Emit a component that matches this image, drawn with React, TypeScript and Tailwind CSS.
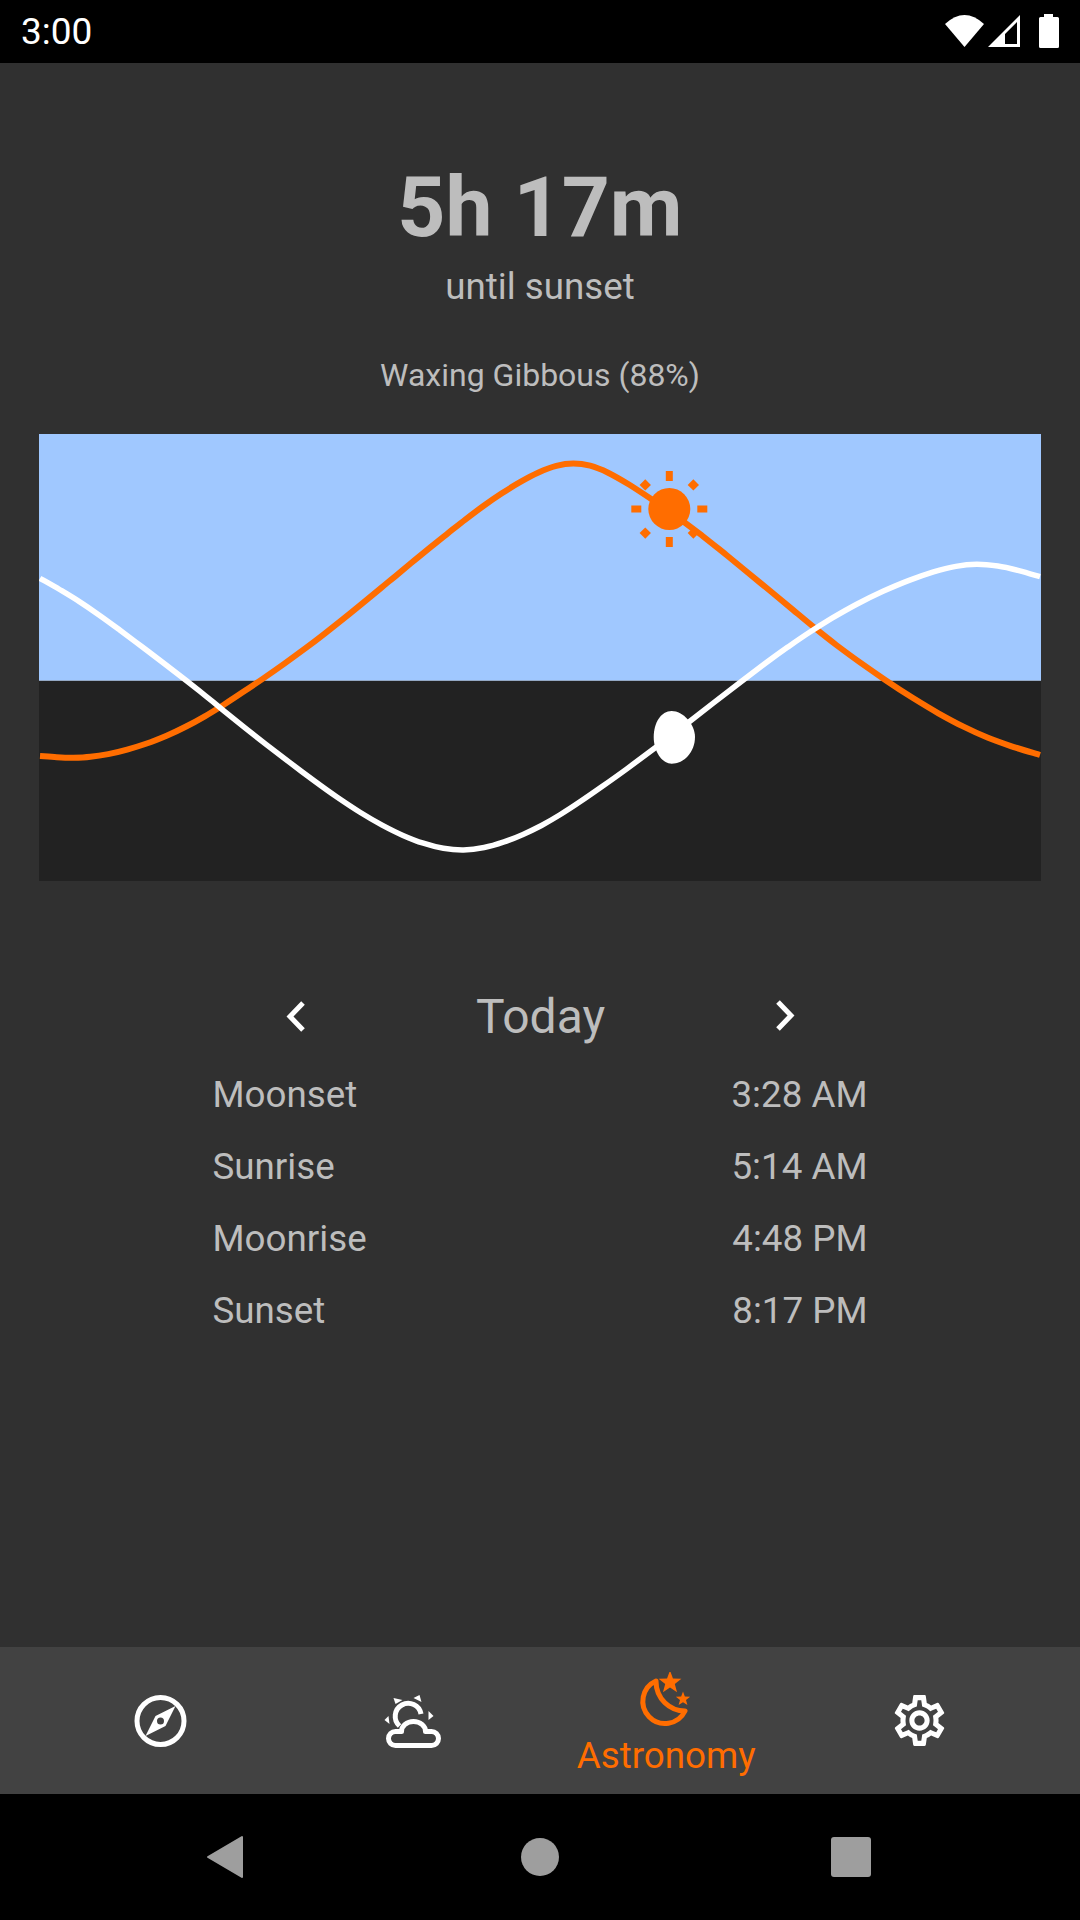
import { ReactNode } from "react";

const ORANGE = "#ff6d00";

type Pt = [number, number];

const SUN: Pt[] = [
  [0, 948], [50, 953], [100, 958], [150, 955], [200, 946], [260, 932], [320, 915], [380, 890], [440, 863],
  [500, 828], [545, 800], [600, 763], [665, 718], [740, 670], [800, 622], [850, 587], [910, 535], [970, 490],
  [1030, 440], [1070, 402], [1130, 357], [1170, 322], [1220, 282], [1280, 235], [1330, 195], [1380, 160],
  [1440, 125], [1500, 88], [1550, 68], [1600, 60], [1650, 66], [1700, 88], [1750, 122], [1830, 170], [1940, 250],
  [1990, 285], [2050, 340], [2120, 392], [2190, 455], [2270, 515], [2325, 568], [2380, 610], [2450, 665],
  [2540, 722], [2620, 780], [2700, 825], [2770, 865], [2840, 895], [2910, 925], [3000, 945],
];
const MOON: Pt[] = [
  [0, 415], [60, 445], [120, 485], [170, 515], [230, 565], [310, 620], [380, 680], [445, 722], [500, 770],
  [545, 808], [610, 860], [670, 910], [750, 965], [820, 1025], [900, 1080], [960, 1120], [1030, 1162],
  [1090, 1192], [1150, 1214], [1210, 1232], [1270, 1242], [1330, 1232], [1400, 1206], [1450, 1185], [1500, 1163],
  [1560, 1130], [1620, 1085], [1680, 1045], [1740, 1003], [1840, 930], [1950, 845], [2020, 790], [2100, 725],
  [2180, 665], [2250, 615], [2310, 575], [2360, 540], [2450, 487], [2530, 450], [2610, 415], [2690, 390],
  [2750, 372], [2810, 362], [2870, 370], [2940, 390], [3000, 410],
];

// irons out the wobble of the hand tracing
function relax(pts: Pt[]): Pt[] {
  return pts.map((p, i) => {
    if (i === 0 || i === pts.length - 1) return p;
    const a = pts[i - 1];
    const c = pts[i + 1];
    return [(a[0] + 2 * p[0] + c[0]) / 4, (a[1] + 2 * p[1] + c[1]) / 4];
  });
}

function smooth(raw: Pt[]) {
  const p = relax(relax(relax(raw))).map(([x, y]): Pt => [1 + x / 3, 6 + y / 3]);
  let d = `M${p[0][0].toFixed(1)} ${p[0][1].toFixed(1)}`;
  for (let i = 0; i < p.length - 1; i++) {
    const a = p[Math.max(i - 1, 0)];
    const b = p[i];
    const c = p[i + 1];
    const e = p[Math.min(i + 2, p.length - 1)];
    const c1 = [b[0] + (c[0] - a[0]) / 6, b[1] + (c[1] - a[1]) / 6];
    const c2 = [c[0] - (e[0] - b[0]) / 6, c[1] - (e[1] - b[1]) / 6];
    d += `C${c1[0].toFixed(1)} ${c1[1].toFixed(1)} ${c2[0].toFixed(1)} ${c2[1].toFixed(1)} ${c[0].toFixed(1)} ${c[1].toFixed(1)}`;
  }
  return d;
}

function star(cx: number, cy: number, r: number) {
  const pts: string[] = [];
  for (let i = 0; i < 10; i++) {
    const rad = i % 2 === 0 ? r : r * 0.42;
    const a = -Math.PI / 2 + (i * Math.PI) / 5;
    pts.push(`${(cx + rad * Math.cos(a)).toFixed(2)},${(cy + rad * Math.sin(a)).toFixed(2)}`);
  }
  return pts.join(" ");
}

function StatusBar() {
  return (
    <div className="h-[63px] bg-black flex items-center justify-between px-[21px] shrink-0">
      <span className="text-white text-[37px] leading-[63px]">3:00</span>
      <svg width="120" height="63" viewBox="0 0 120 63" fill="white">
        <path d="M6 24 Q25.5 6 45 24 L25.5 47Z" />
        <path fillRule="evenodd" d="M81 15V47H49ZM78 22 L66 34V44H78Z" />
        <path d="M105 14h9v3h4.5a1.5 1.5 0 0 1 1.5 1.5V46.5a1.5 1.5 0 0 1-1.5 1.5H101.5a1.5 1.5 0 0 1-1.5-1.5V18.5a1.5 1.5 0 0 1 1.5-1.5H105Z" />
      </svg>
    </div>
  );
}

function Chart() {
  const rays = [0, 90, 180, 270];
  const diag = [45, 135, 225, 315];
  return (
    <svg width="1002" height="447" viewBox="0 0 1002 447" className="block mx-auto mt-[39px]">
      <rect width="1002" height="247" fill="#a0c8ff" />
      <rect y="247" width="1002" height="200" fill="#222222" />
      <rect y="246" width="1002" height="1" fill="#94a8c4" />
      <path d={smooth(SUN)} fill="none" stroke={ORANGE} strokeWidth="6" />
      <path d={smooth(MOON)} fill="none" stroke="white" strokeWidth="5.5" />
      <g transform="translate(630.3 75)">
        <circle r="21" fill={ORANGE} />
        {rays.map((r) => (
          <rect key={r} x="-3.5" y="-38" width="7" height="10" fill={ORANGE} transform={`rotate(${r})`} />
        ))}
        {diag.map((r) => (
          <rect key={r} x="-4" y="-38" width="8" height="8" fill={ORANGE} transform={`rotate(${r})`} />
        ))}
      </g>
      <path
        d="M632.7 277C644 277 656 290 656 303C656 318 645 329.7 632.7 329.7C622 329.7 614.7 316 614.7 303C614.7 289 622 277 632.7 277Z"
        fill="white"
      />
    </svg>
  );
}

function Chevron({ flip }: { flip?: boolean }) {
  return (
    <svg width="48" height="48" viewBox="0 0 48 48" fill="none" stroke="white" strokeWidth="5" className={flip ? "rotate-180" : ""}>
      <path d={flip ? "M31 12 L18 25.5 L31 39" : "M31 10 L18 23.5 L31 37"} />
    </svg>
  );
}

function TimeRow({ label, time }: { label: string; time: string }) {
  return (
    <div className="flex justify-between h-[72px] leading-[72px] text-[36.75px]">
      <span>{label}</span>
      <span>{time}</span>
    </div>
  );
}

function NavItem({ children, label }: { children: ReactNode; label?: string }) {
  return (
    <div className={`w-[252.5px] flex flex-col items-center ${label ? "pt-[25px]" : "justify-center"}`}>
      {children}
      {label && <span className="text-[#ff6d00] text-[36.75px] leading-[42px] mt-[2.5px]">{label}</span>}
    </div>
  );
}

function BottomNav() {
  return (
    <div className="h-[147px] bg-[#424242] flex px-[35px] shrink-0">
      <NavItem>
        <svg width="60" height="60" viewBox="0.5 0 60 60" fill="white">
          <circle cx="30" cy="30" r="23.5" fill="none" stroke="white" strokeWidth="5" />
          <path fillRule="evenodd" d="M45 15 L35 35 L15 45 L25 25Z M30 26.5a3.5 3.5 0 1 0 0 7a3.5 3.5 0 0 0 0-7Z" />
        </svg>
      </NavItem>
      <NavItem>
        <svg width="60" height="60" viewBox="1.5 0 60 60" fill="white">
          <path
            d="M13 54.5H49A7 7 0 0 0 49 40.5H43A12 10 0 0 0 19 40.5H13A7 7 0 0 0 13 54.5Z"
            fill="none"
            stroke="white"
            strokeWidth="5"
            strokeLinejoin="round"
          />
          <path d="M17 35A13 13 0 1 1 38.5 23" fill="none" stroke="white" strokeWidth="5" />
          <polygon points="11,7 20,9 13,13" />
          <polygon points="31,7 37,4 39,11" />
          <polygon points="46,20 51,25 46,29" />
          <polygon points="6,25 2,29 7,33" />
        </svg>
      </NavItem>
      <NavItem label="Astronomy">
        <svg width="60" height="60" viewBox="2 0 60 60" fill={ORANGE}>
          <path
            d="M22 9A22.2 22.2 0 1 0 51 39C36 39 22 27 22 9Z"
            fill="none"
            stroke={ORANGE}
            strokeWidth="5"
            strokeLinejoin="round"
          />
          <polygon points={star(36, 10.5, 12)} />
          <polygon points={star(49, 27, 7.5)} />
        </svg>
      </NavItem>
      <NavItem>
        <svg width="61" height="61" viewBox="0 0 24 24" fill="white" className="ml-[1px]">
          <path d="M19.43 12.98c.04-.32.07-.64.07-.98 0-.34-.03-.66-.07-.98l2.11-1.65c.19-.15.24-.42.12-.64l-2-3.46c-.09-.16-.26-.25-.44-.25-.06 0-.12.01-.17.03l-2.49 1c-.52-.4-1.08-.73-1.69-.98l-.38-2.65C14.46 2.18 14.25 2 14 2h-4c-.25 0-.46.18-.49.42l-.38 2.65c-.61.25-1.17.59-1.69.98l-2.49-1c-.06-.02-.12-.03-.18-.03-.17 0-.34.09-.43.25l-2 3.46c-.13.22-.07.49.12.64l2.11 1.65c-.04.32-.07.65-.07.98 0 .33.03.66.07.98l-2.11 1.65c-.19.15-.24.42-.12.64l2 3.46c.09.16.26.25.44.25.06 0 .12-.01.17-.03l2.49-1c.52.4 1.08.73 1.69.98l.38 2.65c.03.24.24.42.49.42h4c.25 0 .46-.18.49-.42l.38-2.65c.61-.25 1.17-.59 1.69-.98l2.49 1c.06.02.12.03.18.03.17 0 .34-.09.43-.25l2-3.46c.12-.22.07-.49-.12-.64l-2.11-1.65zm-1.98-1.71c.04.31.05.52.05.73 0 .21-.02.43-.05.73l-.14 1.13.89.7 1.08.84-.7 1.21-1.27-.51-1.04-.42-.9.68c-.43.32-.84.56-1.25.73l-1.06.43-.16 1.13-.2 1.35h-1.4l-.19-1.35-.16-1.13-1.06-.43c-.43-.18-.83-.41-1.23-.71l-.91-.7-1.06.43-1.27.51-.7-1.21 1.08-.84.89-.7-.14-1.13c-.03-.31-.05-.54-.05-.74s.02-.43.05-.73l.14-1.13-.89-.7-1.08-.84.7-1.21 1.27.51 1.04.42.9-.68c.43-.32.84-.56 1.25-.73l1.06-.43.16-1.13.2-1.35h1.39l.19 1.35.16 1.13 1.06.43c.43.18.83.41 1.23.71l.91.7 1.06-.43 1.27-.51.7 1.21-1.07.85-.89.7.14 1.13zM12 8c-2.21 0-4 1.79-4 4s1.79 4 4 4 4-1.79 4-4-1.79-4-4-4zm0 6c-1.1 0-2-.9-2-2s.9-2 2-2 2 .9 2 2-.9 2-2 2z" />
        </svg>
      </NavItem>
    </div>
  );
}

function SystemNav() {
  return (
    <div className="h-[126px] bg-black flex items-center pl-[206px] shrink-0">
      <svg width="38" height="44" viewBox="0 0 38 44" fill="#9e9e9e" stroke="#9e9e9e" strokeWidth="2" strokeLinejoin="round">
        <path d="M36 2V42L2 22Z" />
      </svg>
      <div className="ml-[277px] w-[38px] h-[38px] rounded-full bg-[#9e9e9e]" />
      <div className="ml-[272px] w-[40px] h-[40px] rounded-[3px] bg-[#9e9e9e]" />
    </div>
  );
}

export default function App() {
  return (
    <div className="w-[1080px] h-[1920px] flex flex-col bg-[#303030] text-[#bdbdbd] font-['Roboto',sans-serif]">
      <StatusBar />
      <div className="flex-1 flex flex-col">
        <div className="mt-[95px] text-center text-[84px] leading-[100px] font-bold">5h 17m</div>
        <div className="mt-[7px] text-center text-[36.75px] leading-[44px]">until sunset</div>
        <div className="mt-[46px] text-center text-[32px] leading-[40px]">Waxing Gibbous (88%)</div>
        <Chart />
        <div className="mt-[108px] w-[537px] ml-[272px] flex items-center justify-between">
          <Chevron />
          <span className="text-[48px] leading-[56px]">Today</span>
          <Chevron flip />
        </div>
        <div className="mt-[14px] w-[655px] ml-[212.5px]">
          <TimeRow label="Moonset" time="3:28 AM" />
          <TimeRow label="Sunrise" time="5:14 AM" />
          <TimeRow label="Moonrise" time="4:48 PM" />
          <TimeRow label="Sunset" time="8:17 PM" />
        </div>
      </div>
      <BottomNav />
      <SystemNav />
    </div>
  );
}
